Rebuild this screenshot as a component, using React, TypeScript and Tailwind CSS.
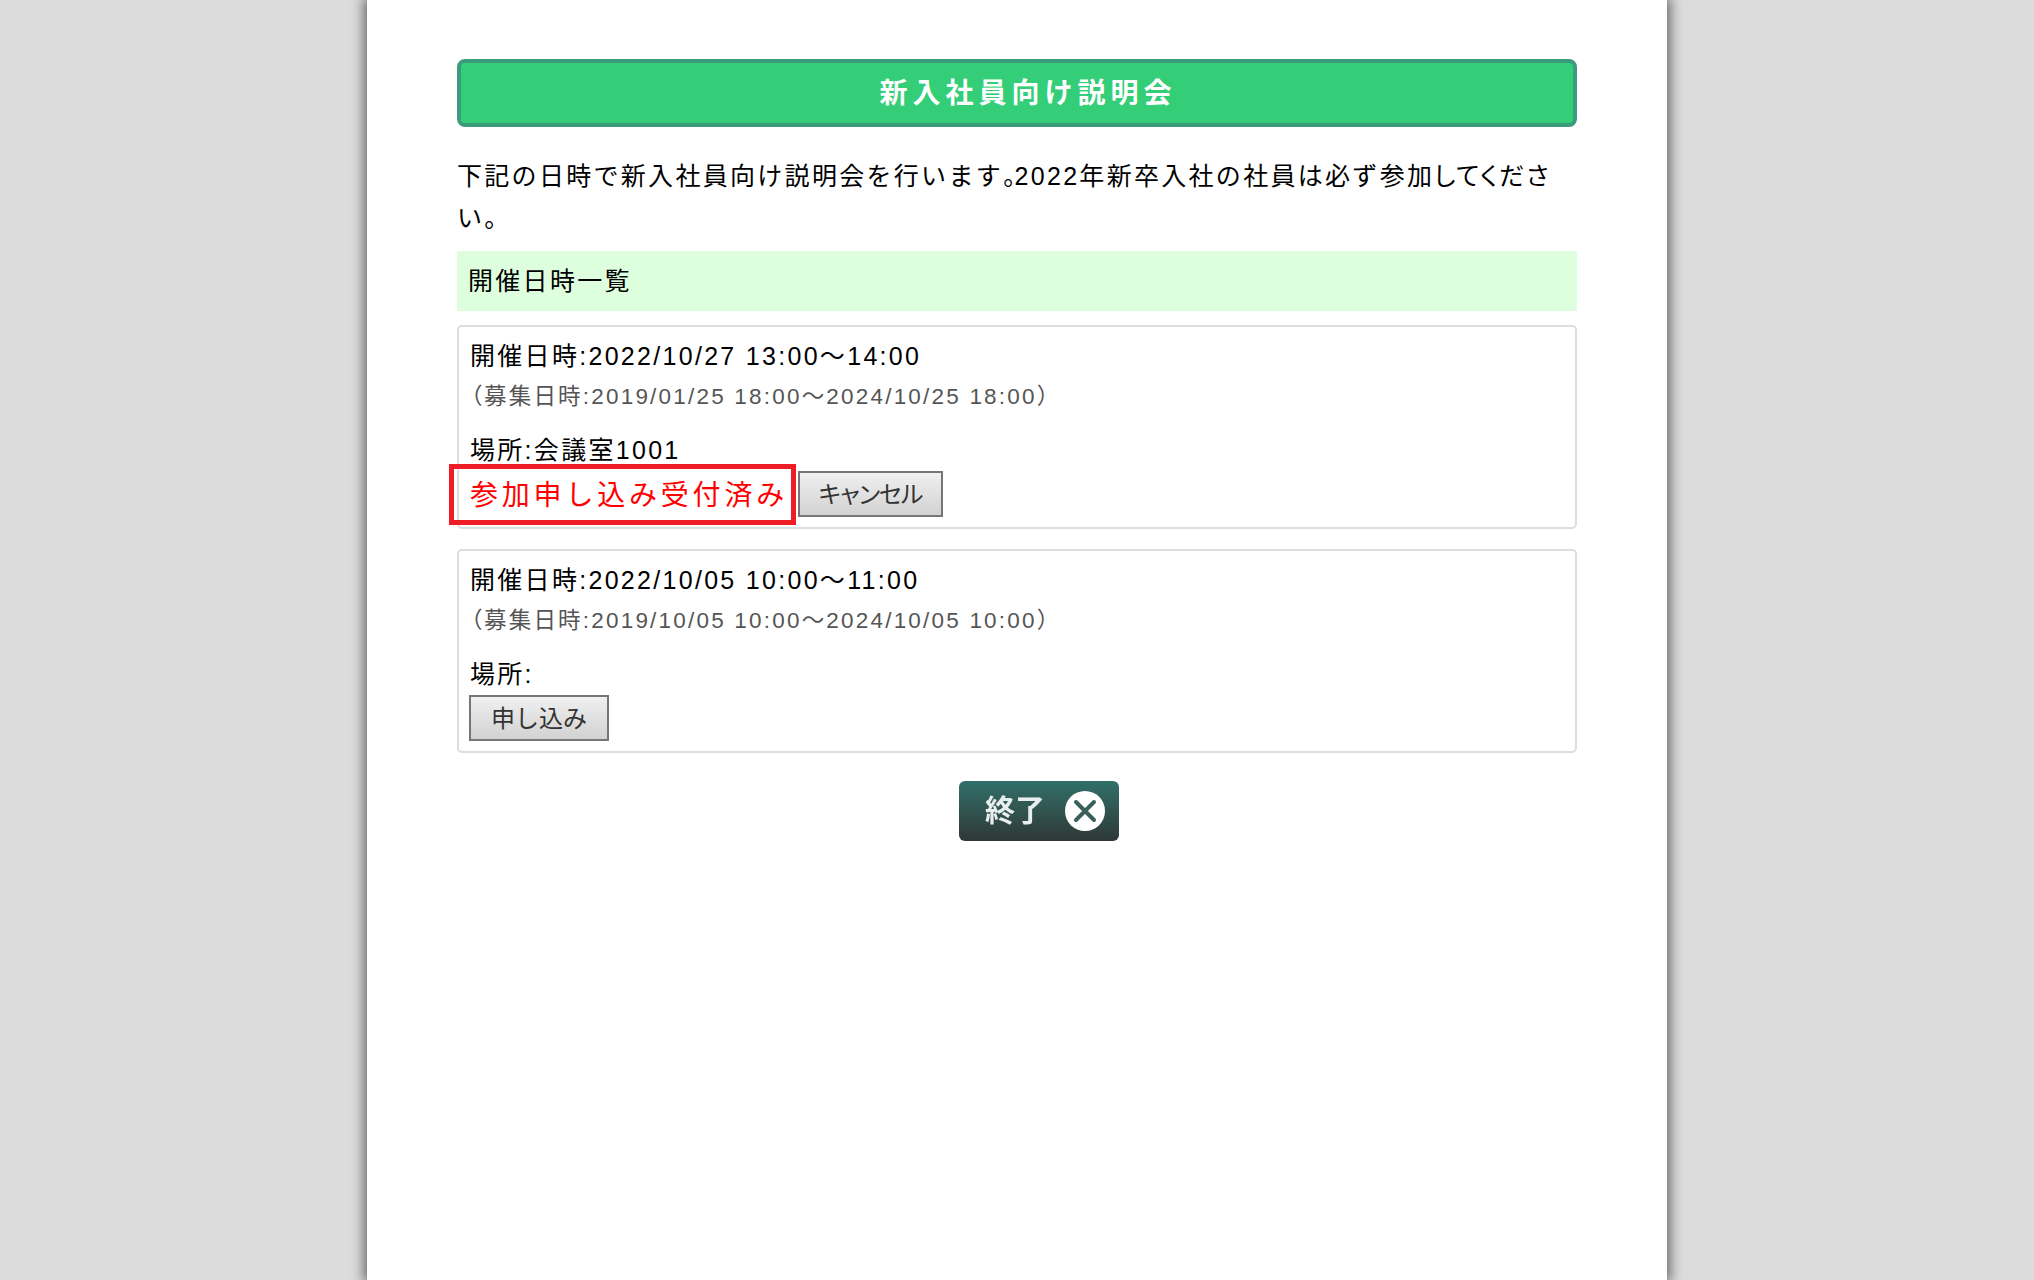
const font = { fontFamily: '"Liberation Sans", "Noto Sans CJK JP", sans-serif' };

function Session({ date, recruit, place, children }: { date: string; recruit: React.ReactNode; place: string; children: React.ReactNode }) {
  return (
    <div className="border-2 border-[#dddddd] rounded-[5px] pl-[11px] pr-2 pt-[9px] pb-[10px] mb-[20px] text-[25px] leading-[40px] tracking-[2.3px] text-black">
      <div className="h-[41px]">{date}</div>
      <div className="h-[40px] text-[22.5px] tracking-[2.2px] text-[#555555]">{recruit}</div>
      <div className="h-[54px] pt-[13px]">{place}</div>
      {children}
    </div>
  );
}

function Paren({ children }: { children: string }) {
  return <span className="-ml-[10px] tracking-[1.5px]">{children}</span>;
}

const btn = "h-[46px] -ml-[1px] border-2 border-[#767676] bg-gradient-to-b from-[#f0f0f0] to-[#d2d2d2] text-[24px] leading-[44px] font-normal text-[#333333] text-center";

export default function App() {
  return (
    <div style={font} className="min-h-screen bg-[#dcdcdc] flex justify-center overflow-hidden">
      <div className="w-[1300px] min-h-[1280px] bg-white shadow-[0_0_12px_3px_rgba(0,0,0,0.55)] px-[90px] pt-[59px]">
        <div className="h-[68px] border-4 border-[#3a9c7c] rounded-[8px] bg-[#34ce78] text-white font-bold text-[28px] tracking-[5px] pl-[22px] pt-[2px] flex items-center justify-center">
          新入社員向け説明会
        </div>
        <p className="mt-[28px] text-[25px] leading-[42px] tracking-[2.3px] text-black">
          下記の日時で新入社員向け説明会を行います<span className="[font-feature-settings:'palt'] tracking-[-1px]">。</span>2022年新卒入社の社員は必ず参加<span className="[font-feature-settings:'palt'] tracking-[1.7px]">してくださ</span>い。
        </p>
        <div className="mt-[12px] mb-[14px] h-[60px] bg-[#deffde] pl-[11px] text-[25px] leading-[60px] tracking-[2.3px] text-black">
          開催日時一覧
        </div>
        <Session date="開催日時:2022/10/27 13:00～14:00" recruit={<><Paren>（</Paren>募集日時:2019/01/25 18:00～2024/10/25 18:00）</>} place="場所:会議室1001">
          <div className="flex items-center h-[46px]">
            <div className="relative w-[326px] text-[28px] tracking-[3.8px] text-[#ff0000] whitespace-nowrap pt-[4px]">
              参加申し込み受付済み
              <div className="absolute -left-[21px] -top-[8px] w-[347px] h-[61px] border-[5px] border-[#ee1c25]" />
            </div>
            <button className={btn + " w-[145px] tracking-[-1px] ml-[2px] [font-feature-settings:'palt']"}>キャンセル</button>
          </div>
        </Session>
        <Session date="開催日時:2022/10/05 10:00～11:00" recruit={<><Paren>（</Paren>募集日時:2019/10/05 10:00～2024/10/05 10:00）</>} place="場所:">
          <button className={btn + " w-[140px] tracking-normal"}>申し込み</button>
        </Session>
        <div className="flex justify-center pl-[44px] pt-[8px]">
          <div className="w-[160px] h-[60px] rounded-[6px] bg-gradient-to-b from-[#30706a] to-[#2d3837] flex items-center pl-[26px] gap-[20px]">
            <span className="text-[30px] leading-none font-bold text-[#e8eeee] blur-[0.5px]">終了</span>
            <svg width="40" height="40" viewBox="0 0 40 40">
              <circle cx="20" cy="20" r="20" fill="#ffffff" />
              <path d="M11 11 L29 29 M29 11 L11 29" stroke="#3a5f5c" strokeWidth="4" strokeLinecap="round" />
            </svg>
          </div>
        </div>
      </div>
    </div>
  );
}
